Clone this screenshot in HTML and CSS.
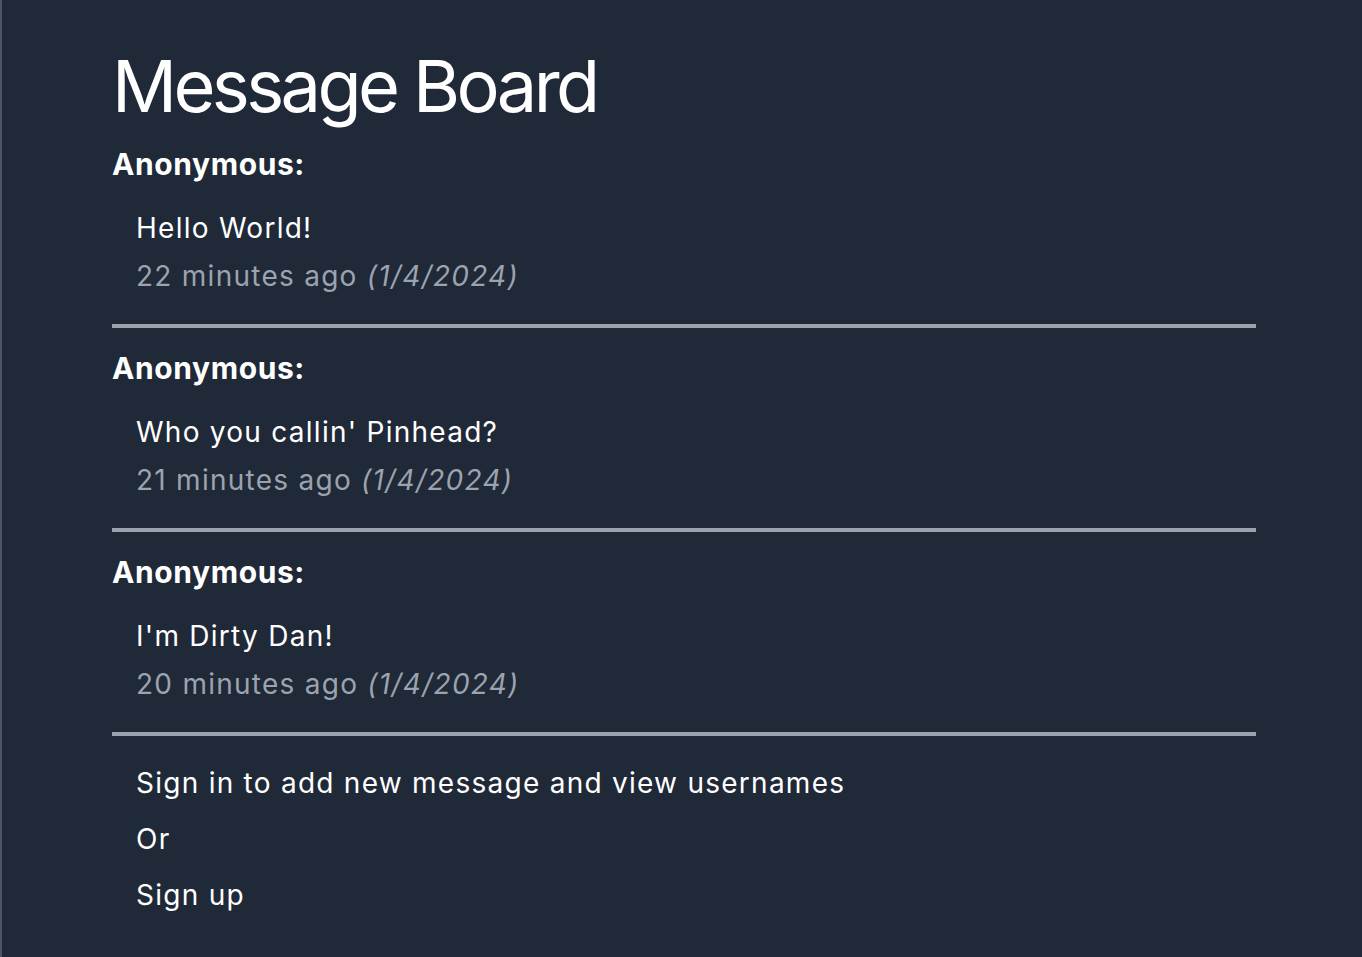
FILE: index.html
```html
<!DOCTYPE html>
<html lang="en">
<head>
<meta charset="utf-8">
<title>Message Board</title>
<link rel="stylesheet" href="styles.css">
</head>
<body>
<main class="board">
  <h1 class="title">Message Board</h1>
  <ul class="messages">
    <li class="message">
      <div class="author">Anonymous:</div>
      <div class="body">
        <p class="text">Hello World!</p>
        <p class="time">22 minutes ago <em>(1/4/2024)</em></p>
      </div>
    </li>
    <li class="message">
      <div class="author">Anonymous:</div>
      <div class="body">
        <p class="text">Who you callin' Pinhead?</p>
        <p class="time">21 minutes ago <em>(1/4/2024)</em></p>
      </div>
    </li>
    <li class="message">
      <div class="author">Anonymous:</div>
      <div class="body">
        <p class="text">I'm Dirty Dan!</p>
        <p class="time">20 minutes ago <em>(1/4/2024)</em></p>
      </div>
    </li>
  </ul>
  <div class="auth">
    <a class="link" href="#">Sign in to add new message and view usernames</a>
    <span class="or">Or</span>
    <a class="link" href="#">Sign up</a>
  </div>
</main>
</body>
</html>
```

FILE: styles.css
```css
html, body {
  margin: 0;
  padding: 0;
}
body {
  background: #1f2937;
  color: #ffffff;
  font-family: Inter, "Noto Sans", "Liberation Sans", sans-serif;
  min-height: 100vh;
  box-sizing: border-box;
  border-left: 2px solid #4b5563;
}
.board {
  padding: 50px 0 0 110px;
  width: 1144px;
}
.title {
  margin: 0 0 21px;
  font-size: 72px;
  line-height: 72px;
  font-weight: 400;
  letter-spacing: -0.05em;
}
.messages {
  list-style: none;
  margin: 0;
  padding: 0;
}
.message {
  border-bottom: 4px solid #9ca3af;
  padding-bottom: 24px;
  margin-bottom: 19px;
}
.author {
  font-size: 30px;
  line-height: 42px;
  font-weight: 700;
  letter-spacing: 0.02em;
}
.body {
  padding-left: 24px;
  margin-top: 19px;
}
.text, .time {
  margin: 0;
  font-size: 28px;
  line-height: 48px;
  letter-spacing: 0.045em;
}
.time {
  color: #9ca3af;
}
.auth {
  display: flex;
  flex-direction: column;
  align-items: flex-start;
  padding-left: 24px;
  margin-top: 7px;
}
.link, .or {
  color: #ffffff;
  text-decoration: none;
  font-size: 28px;
  line-height: 56px;
  letter-spacing: 0.045em;
}
```
